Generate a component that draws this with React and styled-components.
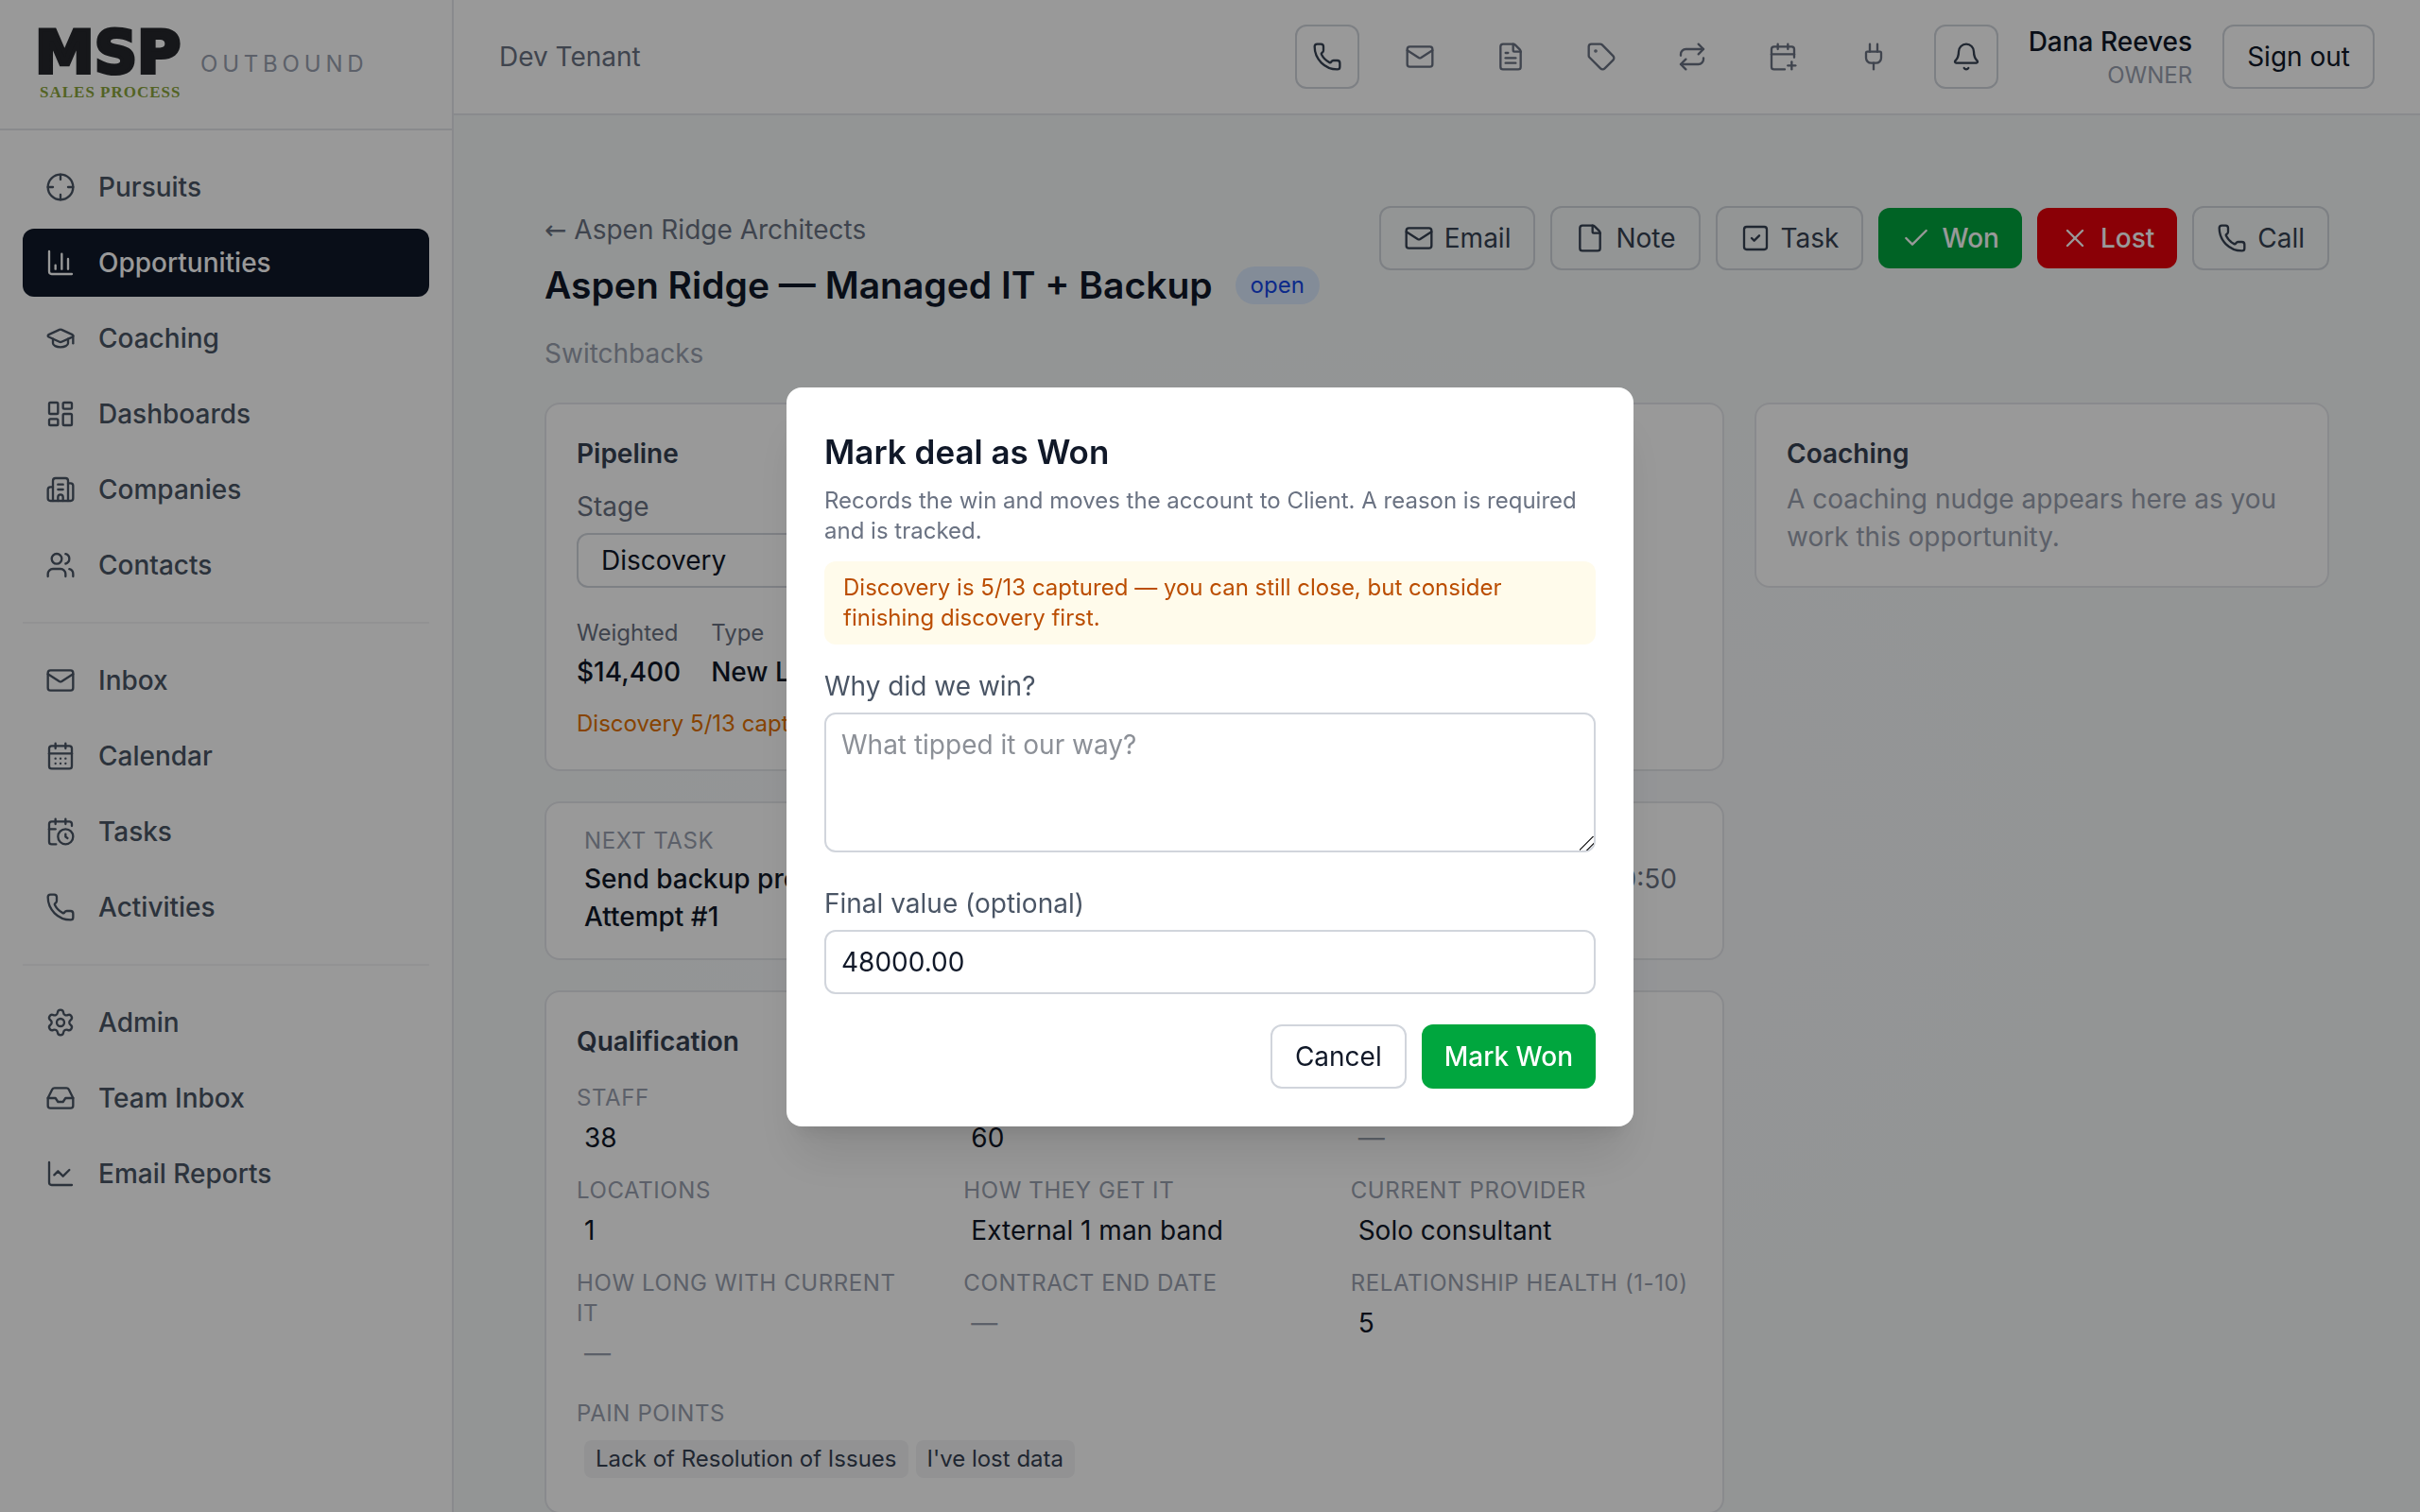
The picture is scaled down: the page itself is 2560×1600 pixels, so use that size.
import React from "react";
import styled, { createGlobalStyle, css } from "styled-components";
import {
  Bell,
  Building2,
  CalendarClock,
  CalendarDays,
  CalendarPlus,
  ChartColumn,
  ChartLine,
  Check,
  Crosshair,
  File,
  FileText,
  GraduationCap,
  Inbox,
  LayoutDashboard,
  Mail,
  Phone,
  Plug,
  Repeat,
  Settings,
  SquareCheck,
  Tag,
  Users,
  X,
} from "lucide-react";

const GlobalStyle = createGlobalStyle`
  *, *::before, *::after {
    box-sizing: border-box;
  }

  html, body, #root {
    height: 100%;
  }

  body {
    margin: 0;
    overflow: hidden;
    font-family: Inter, "Liberation Sans", sans-serif;
    font-size: 32px;
    line-height: 48px;
    color: #101828;
  }

  h1, h2, p, dl, dt, dd {
    margin: 0;
  }

  a {
    color: inherit;
    text-decoration: none;
  }

  button, input, textarea, select {
    font: inherit;
    color: inherit;
  }
`;

const Shell = styled.div`
  display: flex;
  height: 100vh;
  overflow: hidden;
`;

const Sidebar = styled.aside`
  flex: 0 0 480px;
  background: #fff;
  border-right: 2px solid #e5e7eb;
`;

const Brand = styled.div`
  display: flex;
  align-items: center;
  gap: 16px;
  height: 138px;
  padding: 0 40px;
  border-bottom: 2px solid #e5e7eb;
`;

const Logo = styled.svg`
  width: 156px;
  height: 96px;
  overflow: visible;
`;

const BrandName = styled.span`
  font-size: 24px;
  line-height: 32px;
  letter-spacing: 0.2em;
  color: #99a1af;
`;

const Nav = styled.nav`
  display: flex;
  flex-direction: column;
  gap: 8px;
  padding: 24px;
`;

const NavDivider = styled.hr`
  width: 100%;
  margin: 16px 0;
  border: 0;
  border-top: 2px solid #f3f4f6;
`;

const NavLink = styled.a`
  display: flex;
  align-items: center;
  gap: 24px;
  padding: 16px 24px;
  border-radius: 12px;
  font-size: 28px;
  line-height: 40px;
  font-weight: 500;
  color: ${({ $active }) => ($active ? "#fff" : "#4a5565")};
  background: ${({ $active }) => ($active ? "#101828" : "transparent")};
`;

const Page = styled.div`
  display: flex;
  flex-direction: column;
  flex: 1;
  min-width: 0;
`;

const TopBar = styled.header`
  display: flex;
  align-items: center;
  justify-content: space-between;
  padding: 24px 48px;
  background: #fff;
  border-bottom: 2px solid #e5e7eb;
`;

const Tenant = styled.span`
  font-size: 28px;
  line-height: 40px;
  color: #6a7282;
`;

const TopActions = styled.div`
  display: flex;
  align-items: center;
  gap: 32px;
`;

const IconButton = styled.button`
  display: flex;
  padding: 16px;
  border: ${({ $framed }) => ($framed ? "2px solid #d1d5dc" : "0")};
  border-radius: 12px;
  background: transparent;
  color: ${({ $framed }) => ($framed ? "#364153" : "#6a7282")};
`;

const User = styled.div`
  text-align: right;
`;

const UserName = styled.div`
  font-size: 28px;
  line-height: 40px;
  font-weight: 500;
`;

const UserRole = styled.div`
  font-size: 24px;
  line-height: 32px;
  color: #99a1af;
`;

const solid = css`
  border: 0;
  color: #fff;
  font-weight: 500;
`;

const Button = styled.button`
  display: flex;
  align-items: center;
  justify-content: center;
  gap: 11px;
  padding: 12px 24px;
  border: 2px solid #d1d5dc;
  border-radius: 12px;
  background: ${({ $fill }) => $fill || "transparent"};
  font-size: 28px;
  line-height: 40px;
  color: ${({ $muted }) => ($muted ? "#364153" : "#101828")};
  ${({ $fill }) => $fill && solid}
`;

const Main = styled.main`
  flex: 1;
  padding: 96px;
  background: radial-gradient(
    ellipse at 45% 50%,
    #f7f9fb 30%,
    #f5f9f8 60%
  );
`;

const PageHead = styled.div`
  display: flex;
  align-items: flex-start;
  justify-content: space-between;
`;

const Crumb = styled.a`
  font-size: 28px;
  line-height: 40px;
  color: #6a7282;
`;

const Arrow = styled.span`
  font-family: "DejaVu Sans", sans-serif;
`;

const TitleRow = styled.div`
  display: flex;
  align-items: center;
  gap: 24px;
  margin-top: 8px;
`;

const Title = styled.h1`
  font-size: 39px;
  line-height: 56px;
  font-weight: 600;
`;

const Badge = styled.span`
  padding: 4px 16px;
  border-radius: 20px;
  background: #dbeafe;
  font-size: 24px;
  line-height: 32px;
  color: #1447e6;
`;

const Actions = styled.div`
  display: flex;
  align-items: center;
  gap: 16px;
`;

const Subtitle = styled.p`
  margin: 24px 0 32px;
  font-size: 28px;
  line-height: 40px;
  color: #99a1af;
`;

const Columns = styled.div`
  display: grid;
  grid-template-columns: repeat(3, minmax(0, 1fr));
  align-items: start;
  gap: 32px;
`;

const MainColumn = styled.div`
  grid-column: span 2;
  display: flex;
  flex-direction: column;
  gap: 32px;
`;

const Card = styled.section`
  padding: ${({ $slim }) => ($slim ? "24px 40px" : "32px")};
  border: 2px solid #e5e7eb;
  border-radius: 16px;
  background: #fff;
`;

const CardTitle = styled.h2`
  font-size: 28px;
  line-height: 40px;
  font-weight: 600;
  color: #364153;
`;

const CardText = styled.p`
  margin-top: 8px;
  font-size: 28px;
  line-height: 40px;
  color: #99a1af;
`;

const StageLabel = styled.label`
  display: block;
  margin: 16px 0 8px;
  font-size: 28px;
  line-height: 40px;
  color: #6a7282;
`;

const StageSelect = styled.select`
  display: block;
  width: 50%;
  height: 58px;
  padding: 0 20px;
  border: 2px solid #d1d5dc;
  border-radius: 12px;
  background: #fff;
  font-size: 28px;
`;

const Facts = styled.dl`
  display: flex;
  gap: 32px;
  margin: 32px 0 16px;

  dt {
    font-size: 24px;
    line-height: 32px;
    color: #6a7282;
  }

  span {
    font-size: 28px;
    line-height: 40px;
    font-weight: 500;
  }
`;

const Hint = styled.p`
  font-size: 24px;
  line-height: 32px;
  color: #e17100;
`;

const Overline = styled.div`
  font-size: 24px;
  line-height: 32px;
  letter-spacing: 0.025em;
  text-transform: uppercase;
  color: #99a1af;
`;

const TaskRow = styled.div`
  display: flex;
  align-items: flex-start;
  justify-content: space-between;
  margin-top: 4px;
  padding-right: 8px;
  font-size: 28px;
  line-height: 40px;
  font-weight: 500;

  time {
    font-weight: 400;
    color: #6a7282;
  }
`;

const FieldGrid = styled.div`
  display: grid;
  grid-template-columns: repeat(3, minmax(0, 1fr));
  gap: 16px 48px;
  margin: 24px 0;
`;

const FieldValue = styled.div`
  margin-top: 2px;
  padding: 4px 8px;
  font-size: 28px;
  line-height: 40px;
  color: ${({ $empty }) => ($empty ? "#99a1af" : "#101828")};
`;

const Chips = styled.div`
  display: flex;
  gap: 8px;
  margin-top: 8px;
  padding: 4px 8px;
`;

const Chip = styled.span`
  padding: 4px 12px;
  border-radius: 8px;
  background: #f3f4f6;
  font-size: 24px;
  line-height: 32px;
  color: #364153;
`;

const Overlay = styled.div`
  position: fixed;
  inset: 0;
  display: flex;
  align-items: center;
  justify-content: center;
  padding: 34px 32px 32px;
  background: rgba(0, 0, 0, 0.4);
`;

const Dialog = styled.form`
  width: 100%;
  max-width: 896px;
  padding: 40px;
  border-radius: 16px;
  background: #fff;
  box-shadow: 0 40px 50px -10px rgba(0, 0, 0, 0.1),
    0 16px 20px -12px rgba(0, 0, 0, 0.1);
`;

const DialogTitle = styled.h2`
  font-size: 35px;
  line-height: 56px;
  font-weight: 600;
`;

const DialogText = styled.p`
  margin-top: 8px;
  font-size: 24px;
  line-height: 32px;
  color: #6a7282;
`;

const Warning = styled.p`
  margin-top: 16px;
  padding: 12px 20px;
  border-radius: 12px;
  background: #fffbeb;
  font-size: 24px;
  line-height: 32px;
  color: #bb4d00;
`;

const Label = styled.label`
  display: block;
  margin: ${({ $spaced }) => ($spaced ? "34px" : "24px")} 0 8px;
  font-size: 28px;
  line-height: 40px;
  color: #4a5565;
`;

const field = css`
  display: block;
  width: 100%;
  padding: 12px 16px;
  border: 2px solid #d1d5dc;
  border-radius: 12px;
  background: #fff;
  font-size: 28px;
  line-height: 40px;
`;

const TextArea = styled.textarea`
  ${field}

  &::placeholder {
    color: #8c9097;
  }

  &::-webkit-resizer {
    background: linear-gradient(
      135deg,
      transparent 46%,
      #444 46% 52%,
      transparent 52% 71%,
      #444 71% 77%,
      transparent 77%
    );
  }
`;

const Input = styled.input`
  ${field}
`;

const DialogActions = styled.div`
  display: flex;
  justify-content: flex-end;
  gap: 16px;
  margin-top: 32px;
`;

const navGroups = [
  [
    ["Pursuits", Crosshair],
    ["Opportunities", ChartColumn],
    ["Coaching", GraduationCap],
    ["Dashboards", LayoutDashboard],
    ["Companies", Building2],
    ["Contacts", Users],
  ],
  [
    ["Inbox", Mail],
    ["Calendar", CalendarDays],
    ["Tasks", CalendarClock],
    ["Activities", Phone],
  ],
  [
    ["Admin", Settings],
    ["Team Inbox", Inbox],
    ["Email Reports", ChartLine],
  ],
];

const tools = [
  ["Email", Mail],
  ["Templates", FileText],
  ["Tags", Tag],
  ["Sequences", Repeat],
  ["Schedule", CalendarPlus],
  ["Integrations", Plug],
];

const qualification = [
  ["Staff", "38"],
  ["Workstations", "60"],
  ["Servers", ""],
  ["Locations", "1"],
  ["How they get IT", "External 1 man band"],
  ["Current provider", "Solo consultant"],
  ["How long with current IT", ""],
  ["Contract end date", ""],
  ["Relationship health (1-10)", "5"],
];

const Icon = ({ as: Glyph }) => (
  <Glyph size={32} strokeWidth={1.75} aria-hidden="true" />
);

const App = () => {
  return (
    <>
      <GlobalStyle />
      <Shell>
        <Sidebar>
          <Brand>
            <Logo viewBox="0 0 156 96" role="img" aria-label="MSP Sales Process">
              <text
                x="-3"
                y="57"
                fontFamily="'DejaVu Sans', sans-serif"
                fontSize="63"
                fontWeight="700"
                fill="#25272c"
                stroke="#25272c"
                strokeWidth="4"
              >
                MSP
              </text>
              <text
                x="2"
                y="83"
                fontFamily="'Liberation Serif', serif"
                fontSize="17"
                fontWeight="700"
                letterSpacing="1"
                fill="#8ba63c"
              >
                SALES PROCESS
              </text>
            </Logo>
            <BrandName>OUTBOUND</BrandName>
          </Brand>
          <Nav>
            {navGroups.map((group, index) => (
              <React.Fragment key={index}>
                {index > 0 && <NavDivider />}
                {group.map(([name, glyph]) => (
                  <NavLink key={name} href="#" $active={name === "Opportunities"}>
                    <Icon as={glyph} />
                    {name}
                  </NavLink>
                ))}
              </React.Fragment>
            ))}
          </Nav>
        </Sidebar>

        <Page>
          <TopBar>
            <Tenant>Dev Tenant</Tenant>
            <TopActions>
              <IconButton $framed aria-label="Dialer">
                <Icon as={Phone} />
              </IconButton>
              {tools.map(([name, glyph]) => (
                <IconButton key={name} aria-label={name}>
                  <Icon as={glyph} />
                </IconButton>
              ))}
              <IconButton $framed aria-label="Notifications">
                <Icon as={Bell} />
              </IconButton>
              <User>
                <UserName>Dana Reeves</UserName>
                <UserRole>OWNER</UserRole>
              </User>
              <Button>Sign out</Button>
            </TopActions>
          </TopBar>

          <Main>
            <PageHead>
              <div>
                <div>
                  <Crumb href="#">
                    <Arrow>←</Arrow> Aspen Ridge Architects
                  </Crumb>
                </div>
                <TitleRow>
                  <Title>Aspen Ridge — Managed IT + Backup</Title>
                  <Badge>open</Badge>
                </TitleRow>
              </div>
              <Actions>
                <Button $muted>
                  <Icon as={Mail} />
                  Email
                </Button>
                <Button $muted>
                  <Icon as={File} />
                  Note
                </Button>
                <Button $muted>
                  <Icon as={SquareCheck} />
                  Task
                </Button>
                <Button $fill="#00a63e">
                  <Icon as={Check} />
                  Won
                </Button>
                <Button $fill="#e7000b">
                  <Icon as={X} />
                  Lost
                </Button>
                <Button $muted>
                  <Icon as={Phone} />
                  Call
                </Button>
              </Actions>
            </PageHead>
            <Subtitle>Switchbacks</Subtitle>

            <Columns>
              <MainColumn>
                <Card>
                  <CardTitle>Pipeline</CardTitle>
                  <StageLabel htmlFor="stage">Stage</StageLabel>
                  <StageSelect id="stage" defaultValue="Discovery">
                    <option>Discovery</option>
                    <option>Proposal</option>
                  </StageSelect>
                  <Facts>
                    <div>
                      <dt>Weighted</dt>
                      <dd>
                        <span>$14,400</span>
                      </dd>
                    </div>
                    <div>
                      <dt>Type</dt>
                      <dd>
                        <span>New Logo</span>
                      </dd>
                    </div>
                  </Facts>
                  <Hint>Discovery 5/13 captured</Hint>
                </Card>

                <Card $slim>
                  <Overline>Next task</Overline>
                  <TaskRow>
                    <div>
                      Send backup proposal
                      <br />
                      Attempt #1
                    </div>
                    <time>10:50</time>
                  </TaskRow>
                </Card>

                <Card>
                  <CardTitle>Qualification</CardTitle>
                  <FieldGrid>
                    {qualification.map(([name, value]) => (
                      <div key={name}>
                        <Overline>{name}</Overline>
                        <FieldValue $empty={!value}>{value || "—"}</FieldValue>
                      </div>
                    ))}
                  </FieldGrid>
                  <Overline>Pain points</Overline>
                  <Chips>
                    <Chip>Lack of Resolution of Issues</Chip>
                    <Chip>I've lost data</Chip>
                  </Chips>
                </Card>
              </MainColumn>

              <Card>
                <CardTitle>Coaching</CardTitle>
                <CardText>
                  A coaching nudge appears here as you work this opportunity.
                </CardText>
              </Card>
            </Columns>
          </Main>
        </Page>
      </Shell>

      <Overlay>
        <Dialog role="dialog" aria-modal="true" aria-labelledby="dialog-title">
          <DialogTitle id="dialog-title">Mark deal as Won</DialogTitle>
          <DialogText>
            Records the win and moves the account to Client. A reason is
            required and is tracked.
          </DialogText>
          <Warning>
            Discovery is 5/13 captured — you can still close, but consider
            finishing discovery first.
          </Warning>
          <Label htmlFor="reason">Why did we win?</Label>
          <TextArea id="reason" rows={3} placeholder="What tipped it our way?" />
          <Label htmlFor="value" $spaced>
            Final value (optional)
          </Label>
          <Input id="value" defaultValue="48000.00" />
          <DialogActions>
            <Button type="button">Cancel</Button>
            <Button type="button" $fill="#00a63e">
              Mark Won
            </Button>
          </DialogActions>
        </Dialog>
      </Overlay>
    </>
  );
};

export default App;
